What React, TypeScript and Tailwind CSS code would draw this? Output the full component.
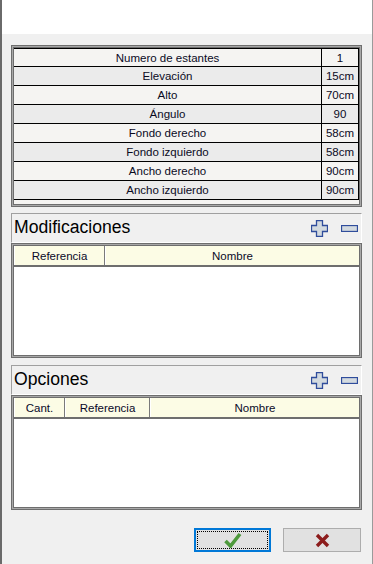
import React from "react";

const rows: [string, string][] = [
  ["Numero de estantes", "1"],
  ["Elevación", "15cm"],
  ["Alto", "70cm"],
  ["Ángulo", "90"],
  ["Fondo derecho", "58cm"],
  ["Fondo izquierdo", "58cm"],
  ["Ancho derecho", "90cm"],
  ["Ancho izquierdo", "90cm"],
];

function PlusIcon() {
  return (
    <svg width="17" height="17" viewBox="0 0 17 17">
      <polygon
        points="5.5,0.5 11.5,0.5 11.5,5.5 16.5,5.5 16.5,11.5 11.5,11.5 11.5,16.5 5.5,16.5 5.5,11.5 0.5,11.5 0.5,5.5 5.5,5.5"
        fill="#d3dadf"
        stroke="#2f4d9c"
        strokeWidth="1.3"
      />
    </svg>
  );
}

function MinusIcon() {
  return (
    <svg width="17" height="7" viewBox="0 0 17 7">
      <rect x="0.5" y="0.5" width="16" height="6" fill="#d3dadf" stroke="#2f4d9c" strokeWidth="1.3" />
    </svg>
  );
}

function SectionHeader({ title }: { title: string }) {
  return (
    <div className="h-[30px] flex items-center justify-between border-t border-l border-[#a0a0a0] border-r border-r-white border-b border-b-white pl-[2px] pr-[3px] bg-[#f0f0f0]">
      <span className="text-[17.6px] text-black leading-none" style={{ fontFamily: '"Liberation Sans", Arial, sans-serif' }}>
        {title}
      </span>
      <div className="flex items-center gap-[13px]">
        <PlusIcon />
        <MinusIcon />
      </div>
    </div>
  );
}

function Grid({ cols }: { cols: { label: string; w?: string }[] }) {
  return (
    <div className="h-[115px] border border-[#6e6e6e] bg-[#a8a8a8] p-[1px]">
      <div className="h-full border border-[#6e6e6e] bg-white flex flex-col">
        <div className="flex h-[21px] bg-[#fcfce5] border-b-2 border-[#6e6e6e]">
          {cols.map((c, i) => (
            <div
              key={i}
              className={`${c.w ?? "flex-1"} flex justify-center pt-[2px] text-[11.5px] text-[#0a0a28] border-l border-l-white ${i < cols.length - 1 ? "border-r border-r-[#7a7a7a]" : ""}`}
            >
              {c.label}
            </div>
          ))}
        </div>
      </div>
    </div>
  );
}

export default function App() {
  return (
    <div
      className="w-[373px] h-[564px] flex flex-col bg-[#f0f0f0] border-l-2 border-l-[#6a6a6a] border-r border-r-[#9a9a9a] overflow-hidden"
      style={{ fontFamily: '"Liberation Sans", Arial, sans-serif' }}
    >
      <div className="h-[34px] bg-white shrink-0" />
      <div className="flex flex-col pl-[9px] pr-[10px] pt-[11px]">
        {/* top table */}
        <div className="h-[162px] border border-[#6e6e6e] bg-[#a8a8a8] p-[1px]">
          <div className="h-full border border-[#6e6e6e] bg-[#f5f4f2] flex flex-col">
            {rows.map(([k, v], i) => (
              <div
                key={k}
                className={`flex h-[19px] border-b border-black ${i === 0 ? "border-t" : ""} ${i % 2 === 0 ? "bg-[#f5f4f2]" : "bg-[#ebebeb]"} text-[11.5px] text-[#0a0a1e] leading-[18px]`}
              >
                <div className="flex-1 text-center border-r border-black">{k}</div>
                <div className="w-[37px] text-center border-r border-black">{v}</div>
              </div>
            ))}
          </div>
        </div>

        <div className="h-[6px]" />
        <SectionHeader title="Modificaciones" />
        <Grid cols={[{ label: "Referencia", w: "w-[91px]" }, { label: "Nombre" }]} />

        <div className="h-[7px]" />
        <SectionHeader title="Opciones" />
        <Grid
          cols={[
            { label: "Cant.", w: "w-[51px]" },
            { label: "Referencia", w: "w-[85px]" },
            { label: "Nombre" },
          ]}
        />

        <div className="flex justify-end gap-[12px] mt-[18px] pr-[1px]">
          <button className="w-[77px] h-[24px] border-2 border-[#0078d7] bg-[#e1e1e1] flex items-center justify-center p-[1px]">
            <div className="w-full h-full border border-dotted border-black flex items-center justify-center">
              <svg width="18" height="16" viewBox="0 0 18 16">
                <path d="M1.5 9 L6.5 14 L16 2" fill="none" stroke="#4e9a3c" strokeWidth="3.6" strokeLinejoin="miter" />
              </svg>
            </div>
          </button>
          <button className="w-[78px] h-[24px] border border-[#adadad] bg-[#e1e1e1] flex items-center justify-center">
            <svg width="15" height="15" viewBox="0 0 15 15">
              <path d="M2 2 L13 13 M13 2 L2 13" stroke="#8c1c1c" strokeWidth="3.4" />
            </svg>
          </button>
        </div>
      </div>
    </div>
  );
}
